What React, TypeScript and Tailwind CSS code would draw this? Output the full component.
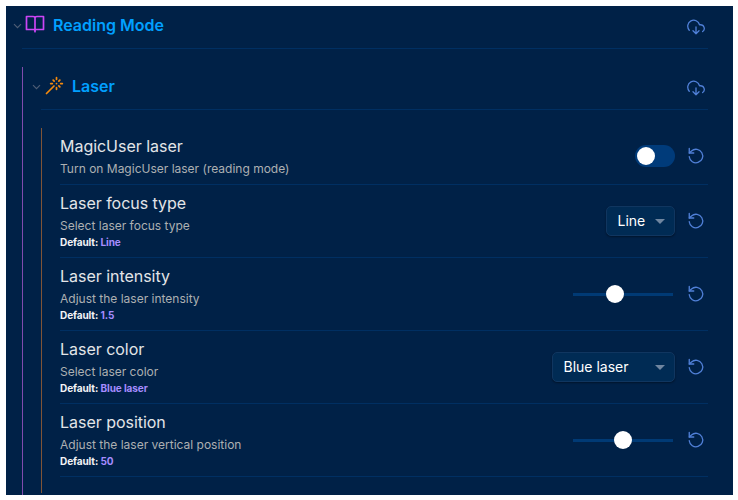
import type { ReactNode } from "react";

function CloudDownload() {
  return (
    <svg className="h-[18px] w-[18px] shrink-0 text-[#5080d8]" viewBox="0 0 24 24" fill="none" stroke="currentColor" strokeWidth="1.75" strokeLinecap="round" strokeLinejoin="round">
      <path d="m8 17 4 4 4-4M12 12v9" />
      <path d="M20.88 18.09A5 5 0 0 0 18 9h-1.26A8 8 0 1 0 3 16.29" />
    </svg>
  );
}

function Reset() {
  return (
    <svg className="h-[18px] w-[18px] shrink-0 text-[#5080d8]" viewBox="0 0 24 24" fill="none" stroke="currentColor" strokeWidth="1.75" strokeLinecap="round" strokeLinejoin="round">
      <path d="M3 2v6h6" />
      <path d="M3 13a9 9 0 1 0 3-7.7L3 8" />
    </svg>
  );
}

function Chevron() {
  return (
    <svg className="mt-[2px] h-[10px] w-[11px] shrink-0 text-[#4d5d75]" viewBox="0 0 11 10" fill="none" stroke="currentColor" strokeWidth="1.2">
      <path d="m2 3.2 3.5 3.5 3.5-3.5" />
    </svg>
  );
}

function Book() {
  return (
    <svg className="mb-[1px] h-[18px] w-[20px] shrink-0 text-[#cb45f5]" viewBox="0 0 20 18" fill="none" stroke="currentColor" strokeWidth="1.7" strokeLinejoin="round" strokeLinecap="round">
      <path d="M1.5 1.5h6.5Q10 1.5 10 3V16.7Q10 14.5 8.7 14.5H1.5ZM18.5 1.5h-6.5Q10 1.5 10 3V16.7Q10 14.5 11.3 14.5h7.2Z" />
    </svg>
  );
}

function Wand() {
  return (
    <svg className="mt-[1px] h-[20px] w-[20px] shrink-0 text-[#f58a0c]" viewBox="0 0 24 24" fill="none" stroke="currentColor" strokeWidth="2.1" strokeLinecap="round" strokeLinejoin="round">
      <path d="M15 4V2M15 16v-2M8 9h2M20 9h2M17.8 11.8 19 13M15 9h.01M17.8 6.2 19 5M3 21l9-9M12.2 6.2 11 5" />
    </svg>
  );
}

function Select({ label, width }: { label: string; width: string }) {
  return (
    <button className={`flex h-[30px] items-center justify-between rounded-[5px] border border-[#103660] bg-[#002b54] pr-[9px] pl-[10.5px] text-[14px] text-white shadow-[0_1px_2px_#00000066] ${width}`}>
      <span className="pb-px">{label}</span>
      <span className="border-x-[5px] border-t-[5px] border-x-transparent border-t-[#6f86a0]" />
    </button>
  );
}

function Slider({ offset }: { offset: string }) {
  return (
    <div className="mr-[2px] flex h-[18px] w-[100px] items-center rounded-sm bg-[linear-gradient(#003a75,#003a75)] bg-[length:100%_3px] bg-center bg-no-repeat">
      <span className={`h-[18px] w-[18px] rounded-full bg-white ${offset}`} />
    </div>
  );
}

function Row({ title, text, value, children }: { title: string; text: string; value?: string; children: ReactNode }) {
  return (
    <div className={`flex items-center justify-between border-b border-[#002f62] ${value ? "h-[73px]" : "h-[57px]"}`}>
      <div className="flex flex-col">
        <div className="pt-px text-[16px] leading-[21px] tracking-[-0.03px] text-[#e3e5e8]">{title}</div>
        <div className="mt-[3px] text-[12px] leading-[18px] text-[#adb0b2]">{text}</div>
        {value && (
          <div className="text-[10px] leading-[15px] font-bold tracking-[-0.08px] text-[#f3f4f6]">
            Default: <span className="text-[#a68cff]">{value}</span>
          </div>
        )}
      </div>
      <div className="flex items-center gap-[12px] pr-[3px]">
        {children}
        <Reset />
      </div>
    </div>
  );
}

export default function App() {
  return (
    <div className="h-[500px] w-[738px] bg-white pt-[6px] pl-[6px] font-['Inter',sans-serif]">
      <main className="h-[489px] w-[727px] overflow-hidden bg-[#002147] pr-[25px]">
        <header className="flex h-[42px] items-center pr-[3px] pl-[6px]">
          <span className="flex items-center gap-[2px] pb-[5px]">
            <Chevron />
            <span className="flex items-center gap-2 text-[16px] font-semibold text-[#00a0ff]">
              <Book />
              Reading Mode
            </span>
          </span>
          <span className="ml-auto"><CloudDownload /></span>
        </header>
        <div className="ml-[16px] h-px bg-[#002f62]" />
        <section className="mt-[18px] ml-[16px] h-[430px] border-l border-[#804bad]">
          <header className="flex h-[42px] items-center pr-[3px] pl-[8px]">
            <span className="flex items-center gap-[2px] pb-[5px]">
              <Chevron />
              <span className="flex items-center gap-2 text-[16px] font-semibold text-[#00a0ff]">
                <Wand />
                Laser
              </span>
            </span>
            <span className="ml-auto"><CloudDownload /></span>
          </header>
          <div className="ml-[18px] h-px bg-[#002f62]" />
          <div className="mt-[18px] ml-[18px] h-[365px] border-l border-[#805437] pl-[18px]">
            <Row title="MagicUser laser" text="Turn on MagicUser laser (reading mode)">
              <div className="flex h-[22px] w-[40px] items-center rounded-full bg-[#003b7a] pl-[2px]">
                <span className="h-[18px] w-[18px] rounded-full bg-white" />
              </div>
            </Row>
            <Row title="Laser focus type" text="Select laser focus type" value="Line">
              <Select label="Line" width="w-[69px]" />
            </Row>
            <Row title="Laser intensity" text="Adjust the laser intensity" value="1.5">
              <Slider offset="ml-[33px]" />
            </Row>
            <Row title="Laser color" text="Select laser color" value="Blue laser">
              <Select label="Blue laser" width="w-[123px]" />
            </Row>
            <Row title="Laser position" text="Adjust the laser vertical position" value="50">
              <Slider offset="ml-[41px]" />
            </Row>
          </div>
        </section>
      </main>
    </div>
  );
}
